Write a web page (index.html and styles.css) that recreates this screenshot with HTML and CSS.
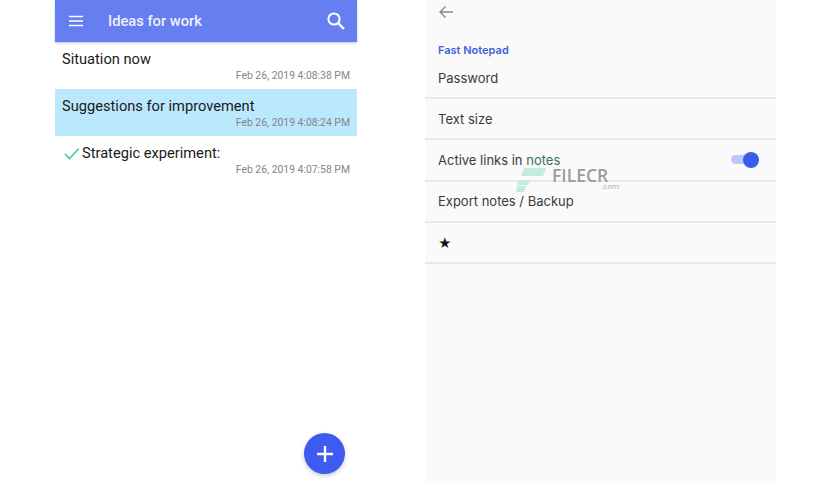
FILE: index.html
```html
<!DOCTYPE html>
<html lang="en">
<head>
  <meta charset="UTF-8" />
  <title>Fast Notepad</title>
  <link rel="stylesheet" href="styles.css">
</head>
<body>

  <section class="notes">
    <header class="topbar">
      <svg class="menu-icon" width="16" height="12" viewBox="0 0 16 12">
        <path d="M1 1.5h14M1 6h14M1 10.5h14" stroke="#fff" stroke-width="1.7" fill="none" />
      </svg>
      <span class="topbar-title">Ideas for work</span>
      <svg class="search-icon" width="20" height="20" viewBox="0 0 20 20">
        <circle cx="8" cy="8" r="5.6" stroke="#fff" stroke-width="2" fill="none" />
        <path d="M12.2 12.2L18 18" stroke="#fff" stroke-width="2.4" fill="none" />
      </svg>
    </header>

    <div class="note">
      <div class="note-title">Situation now</div>
      <div class="note-date">Feb 26, 2019 4:08:38 PM</div>
    </div>
    <div class="note selected">
      <div class="note-title">Suggestions for improvement</div>
      <div class="note-date">Feb 26, 2019 4:08:24 PM</div>
    </div>
    <div class="note">
      <div class="note-title done">
        <svg width="16" height="13" viewBox="0 0 16 13">
          <path d="M1 7l4.5 4.5L15 1.5" stroke="#3ecf8e" stroke-width="1.6" fill="none" />
        </svg>
        Strategic experiment:
      </div>
      <div class="note-date">Feb 26, 2019 4:07:58 PM</div>
    </div>

    <button class="fab">
      <svg width="18" height="18" viewBox="0 0 18 18">
        <path d="M9 1v16M1 9h16" stroke="#fff" stroke-width="2.4" fill="none" />
      </svg>
    </button>
  </section>

  <section class="settings">
    <div class="settings-top">
      <svg width="16" height="14" viewBox="0 0 16 14">
        <path d="M15 7H2M7.500 1.500L2 7l5.500 5.500" stroke="#8a8a8a" stroke-width="1.400" fill="none" />
      </svg>
    </div>
    <div class="settings-group">Fast Notepad</div>
    <div class="setting first">Password</div>
    <div class="setting">Text size</div>
    <div class="setting">
      <span>Active links in <span class="tinted">notes</span></span>
      <span class="switch"><span class="switch-knob"></span></span>
    </div>
    <div class="setting">Export notes / Backup</div>
    <div class="setting star">★</div>

    <div class="watermark">
      <svg width="30" height="24" viewBox="0 0 30 24">
        <path d="M8 0h22l-3 8H5zM3 12h12l-3 5H1zM1 18h9l-2 6H0z" fill="#c4ebdf" />
      </svg>
      <span class="watermark-name">FILECR</span>
      <span class="watermark-com">.com</span>
    </div>
  </section>

</body>
</html>
```

FILE: styles.css
```css
body {
  margin: 0;
  padding: 0 60px 0 55px;
  height: 484px;
  overflow: hidden;
  display: flex;
  justify-content: space-between;
  background-color: #fff;
  font-family: Roboto, sans-serif;
}

/* left phone */
.notes {
  position: relative;
  width: 302px;
  height: 484px;
}

.topbar {
  height: 42px;
  background-color: #667eef;
  box-shadow: 0 1px 2px rgba(80, 100, 220, 0.4);
  display: flex;
  align-items: center;
  padding: 0 11px 0 13px;
  color: #fff;
}

.menu-icon {
  margin-right: 24px;
}

.topbar-title {
  flex: 1;
  font-size: 14.700px;
  font-weight: 500;
  color: #eef1ff;
}

.note {
  height: 47px;
  padding: 0 7px;
  box-sizing: border-box;
}

.note.selected {
  background-color: #bbe8fd;
}

.note-title {
  padding-top: 8px;
  font-size: 14.650px;
  line-height: 19px;
  color: #1a1a1a;
}

.note-title.done {
  display: flex;
  align-items: center;
  gap: 2px;
  padding-left: 2px;
}

.note-date {
  text-align: right;
  font-size: 10.400px;
  line-height: 12px;
  margin-top: 1px;
  color: #858585;
}

.fab {
  position: absolute;
  left: 249px;
  top: 433px;
  width: 41px;
  height: 41px;
  padding: 0;
  border: none;
  border-radius: 50%;
  background-color: #3d5af1;
  box-shadow: 0 2px 5px rgba(0, 0, 0, 0.2);
  display: flex;
  align-items: center;
  justify-content: center;
}

/* right phone */
.settings {
  position: relative;
  width: 351px;
  height: 484px;
  background-color: #fafafa;
  font-family: Inter, Roboto, sans-serif;
}

.settings-top {
  height: 44px;
  padding: 3px 0 0 13px;
  box-sizing: border-box;
}

.settings-group {
  padding-left: 13px;
  height: 14px;
  line-height: 13px;
  font-size: 11px;
  font-weight: 600;
  color: #4360dc;
}

.setting {
  height: 41.250px;
  box-sizing: border-box;
  border-bottom: 2px solid #e9e9e9;
  display: flex;
  align-items: center;
  justify-content: space-between;
  padding: 0 17px 0 13px;
  font-size: 13px;
  color: #3a3a3a;
}

.setting.first {
  height: 41px;
}

.setting.star {
  padding-top: 1px;
  color: #111;
}

.tinted {
  color: #3c6f5f;
}

.switch {
  position: relative;
  width: 28px;
  height: 9px;
  border-radius: 5px;
  background-color: #bcc8f7;
}

.switch-knob {
  position: absolute;
  right: 0;
  top: -3.500px;
  width: 16px;
  height: 16px;
  border-radius: 50%;
  background-color: #3d5ae8;
}

.watermark {
  position: absolute;
  left: 91px;
  top: 168px;
  display: flex;
  align-items: flex-start;
  font-family: "Open Sans", sans-serif;
}

.watermark-name {
  margin-left: 6px;
  font-size: 17.500px;
  line-height: 14px;
  font-weight: 600;
  color: #9b9b9b;
}

.watermark-com {
  margin: 14px 0 0 -7px;
  font-size: 8px;
  line-height: 8px;
  color: #aaa;
}
```
